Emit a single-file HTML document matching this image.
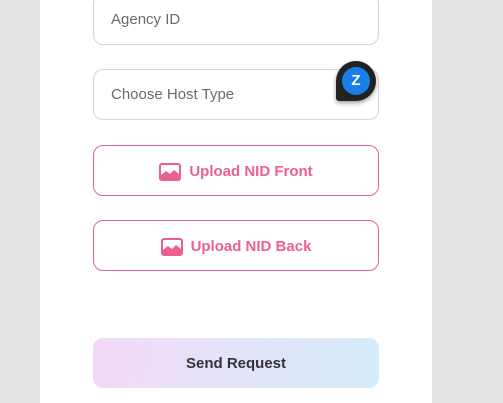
<!DOCTYPE html>
<html><head><style>
body{margin:0;width:503px;height:403px;background:#e4e4e4;font-family:"Liberation Sans",sans-serif;overflow:hidden;position:relative}
.panel{position:absolute;left:40px;top:0;width:392px;height:403px;background:#fff}
.in{position:absolute;left:93px;width:284px;height:49px;border:1px solid #d6d6d6;border-radius:10px;box-sizing:content-box}
.in span{position:absolute;left:17px;top:16px;font-size:15px;color:#6b6b6b}
.up{position:absolute;left:93px;width:284px;height:49px;border:1px solid #ec5f8f;border-radius:10px;display:flex;align-items:center;justify-content:center;color:#ec5f8f;font-size:15px;font-weight:bold;padding-top:2px;box-sizing:content-box;height:47px}
.up svg{margin-right:8px}
.send{position:absolute;left:93px;top:338px;width:286px;height:50px;border-radius:10px;background:linear-gradient(100deg,#f3d8f8,#e3e4f9 50%,#d6ecfa);display:flex;align-items:center;justify-content:center;font-size:15px;font-weight:bold;color:#333}
.badge{position:absolute;left:336px;top:61px;width:40px;height:40px;background:#222;border-radius:20px 20px 20px 3px;box-shadow:0 2px 4px rgba(0,0,0,.4)}
.badge div{position:absolute;left:6px;top:6px;width:28px;height:28px;border-radius:50%;background:#1a7ee8;color:#fff;font-weight:bold;font-size:15px;text-align:center;line-height:28px}
</style></head><body>
<div class="panel"></div>
<div class="in" style="top:-6px"><span style="top:16px">Agency ID</span></div>
<div class="in" style="top:69px"><span>Choose Host Type</span></div>
<div class="badge"><div>Z</div></div>
<div class="up" style="top:145px"><svg width="22" height="18" viewBox="0 0 22 18"><rect x="1" y="1" width="20" height="16" rx="2" fill="none" stroke="#ec5f8f" stroke-width="2"/><path d="M2 16 L2 12 L7 8 L11 11 L15 7 L20 11 L20 16Z" fill="#ec5f8f"/></svg>Upload NID Front</div>
<div class="up" style="top:220px"><svg width="22" height="18" viewBox="0 0 22 18"><rect x="1" y="1" width="20" height="16" rx="2" fill="none" stroke="#ec5f8f" stroke-width="2"/><path d="M2 16 L2 12 L7 8 L11 11 L15 7 L20 11 L20 16Z" fill="#ec5f8f"/></svg>Upload NID Back</div>
<div class="send">Send Request</div>
</body></html>
